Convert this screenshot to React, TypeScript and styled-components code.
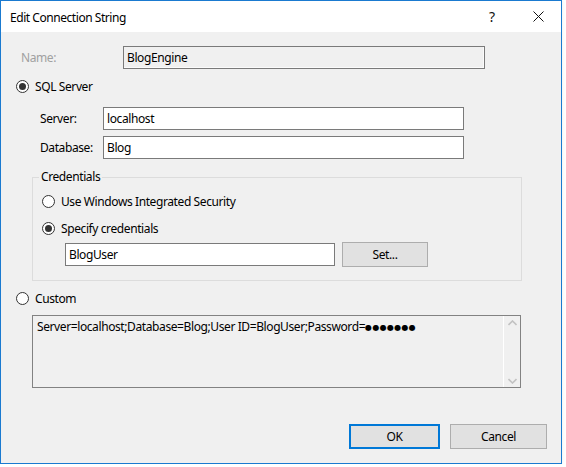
import React from "react";
import styled, { createGlobalStyle } from "styled-components";

const Global = createGlobalStyle`
  html, body { margin: 0; padding: 0; background: #ffffff; }
  body { font-family: "Noto Sans", "Open Sans", sans-serif; font-size: 12px; color: #000; }
  * { box-sizing: border-box; }
`;

const Window = styled.div`
  width: 562px;
  height: 464px;
  border: 1px solid #1a7ad0;
  display: flex;
  flex-direction: column;
  background: #f0f0f0;
  box-shadow: 0 0 4px rgba(0,0,0,0.08);
`;

const TitleBar = styled.div`
  height: 31px;
  background: #ffffff;
  display: flex;
  align-items: center;
  padding-left: 9px;
  flex-shrink: 0;
`;

const Title = styled.div`
  flex: 1;
  font-size: 12px;
  letter-spacing: -0.45px;
  padding-top: 1px;
`;

const TitleButton = styled.div`
  width: 46px;
  height: 31px;
  display: flex;
  align-items: center;
  justify-content: center;
  font-size: 14px;
  color: #111;
`;

const Body = styled.div`
  flex: 1;
  display: flex;
  flex-direction: column;
  padding-top: 14px;
`;

const Row = styled.div<{ $left: number; $top: number }>`
  display: flex;
  align-items: center;
  margin-left: ${(p) => p.$left}px;
  margin-top: ${(p) => p.$top}px;
`;

const Label = styled.div<{ $width: number; $disabled?: boolean }>`
  width: ${(p) => p.$width}px;
  color: ${(p) => (p.$disabled ? "#a0a0a0" : "#000")};
  letter-spacing: -0.4px;
`;

const TextBox = styled.div<{ $width: number; $disabled?: boolean }>`
  width: ${(p) => p.$width}px;
  height: 23px;
  border: 1px solid #7a7a7a;
  background: ${(p) => (p.$disabled ? "#f0f0f0" : "#ffffff")};
  box-shadow: ${(p) => (p.$disabled ? "inset -1px -1px 0 #fbfbfb" : "none")};
  display: flex;
  align-items: center;
  padding-left: 3px;
  letter-spacing: -0.4px;
`;

const RadioRow = styled.label<{ $left: number; $top: number }>`
  display: flex;
  align-items: center;
  height: 16px;
  margin-left: ${(p) => p.$left}px;
  margin-top: ${(p) => p.$top}px;
  letter-spacing: -0.4px;
`;

const RadioCircle = styled.span<{ $checked?: boolean }>`
  width: 13px;
  height: 13px;
  border-radius: 50%;
  border: 1px solid #333333;
  background: #ffffff;
  display: flex;
  align-items: center;
  justify-content: center;
  margin-right: 6px;
  &::after {
    content: "";
    width: 7px;
    height: 7px;
    border-radius: 50%;
    background: #333333;
    display: ${(p) => (p.$checked ? "block" : "none")};
  }
`;

const Group = styled.fieldset`
  margin: 10px 0 0 31px;
  width: 490px;
  height: 112px;
  border: 1px solid #dcdcdc;
  padding: 0;
  display: flex;
  flex-direction: column;
`;

const Legend = styled.legend`
  margin-left: 6px;
  padding: 0 2px;
  letter-spacing: -0.4px;
  line-height: 16px;
`;

const Button = styled.div<{ $width: number; $primary?: boolean }>`
  width: ${(p) => p.$width}px;
  height: 25px;
  background: #e1e1e1;
  border: ${(p) => (p.$primary ? "2px solid #0078d7" : "1px solid #adadad")};
  display: flex;
  align-items: center;
  justify-content: center;
  letter-spacing: -0.4px;
`;

const TextArea = styled.div`
  margin: 9px 0 0 31px;
  width: 489px;
  height: 73px;
  border: 1px solid #828282;
  background: #f0f0f0;
  display: flex;
`;

const AreaText = styled.div`
  flex: 1;
  padding: 2px 0 0 4px;
  letter-spacing: -0.4px;
  white-space: nowrap;
`;

const Dots = styled.span`
  font-family: "DejaVu Sans", sans-serif;
  font-size: 8px;
  letter-spacing: 0.3px;
  vertical-align: 1px;
`;

const ScrollBar = styled.div`
  width: 17px;
  border-left: 1px solid #ffffff;
  display: flex;
  flex-direction: column;
  justify-content: space-between;
  align-items: center;
  padding: 4px 0 3px;
`;

const Footer = styled.div`
  margin-top: 36px;
  display: flex;
  justify-content: flex-end;
  gap: 10px;
  padding-right: 14px;
`;

const Chevron = ({ up }: { up?: boolean }) => (
  <svg width="9" height="6" viewBox="0 0 9 6">
    <path
      d={up ? "M0.5 5 L4.5 1 L8.5 5" : "M0.5 1 L4.5 5 L8.5 1"}
      fill="none"
      stroke="#c2c2c2"
      strokeWidth="1.6"
    />
  </svg>
);

const CloseIcon = () => (
  <svg width="11" height="11" viewBox="0 0 11 11">
    <path d="M0.5 0.5 L10.5 10.5 M10.5 0.5 L0.5 10.5" stroke="#111" strokeWidth="1" />
  </svg>
);

export default function App() {
  return (
    <>
      <Global />
      <Window>
        <TitleBar>
          <Title>Edit Connection String</Title>
          <TitleButton>?</TitleButton>
          <TitleButton>
            <CloseIcon />
          </TitleButton>
        </TitleBar>
        <Body>
          <Row $left={20} $top={0}>
            <Label $width={102} $disabled>Name:</Label>
            <TextBox $width={362} $disabled>BlogEngine</TextBox>
          </Row>
          <RadioRow $left={15} $top={9}>
            <RadioCircle $checked />
            SQL Server
          </RadioRow>
          <Row $left={39} $top={13}>
            <Label $width={63}>Server:</Label>
            <TextBox $width={361}>localhost</TextBox>
          </Row>
          <Row $left={39} $top={6}>
            <Label $width={63}>Database:</Label>
            <TextBox $width={361}>Blog</TextBox>
          </Row>
          <Group>
            <Legend>Credentials</Legend>
            <RadioRow $left={9} $top={8}>
              <RadioCircle />
              Use Windows Integrated Security
            </RadioRow>
            <RadioRow $left={9} $top={11}>
              <RadioCircle $checked />
              Specify credentials
            </RadioRow>
            <Row $left={32} $top={6}>
              <TextBox $width={270}>BlogUser</TextBox>
              <Button $width={86} style={{ marginLeft: 7 }}>Set...</Button>
            </Row>
          </Group>
          <RadioRow $left={15} $top={9}>
            <RadioCircle />
            Custom
          </RadioRow>
          <TextArea>
            <AreaText>
              Server=localhost;Database=Blog;User ID=BlogUser;Password=<Dots>●●●●●●●</Dots>
            </AreaText>
            <ScrollBar>
              <Chevron up />
              <Chevron />
            </ScrollBar>
          </TextArea>
          <Footer>
            <Button $width={91} $primary>OK</Button>
            <Button $width={97}>Cancel</Button>
          </Footer>
        </Body>
      </Window>
    </>
  );
}
